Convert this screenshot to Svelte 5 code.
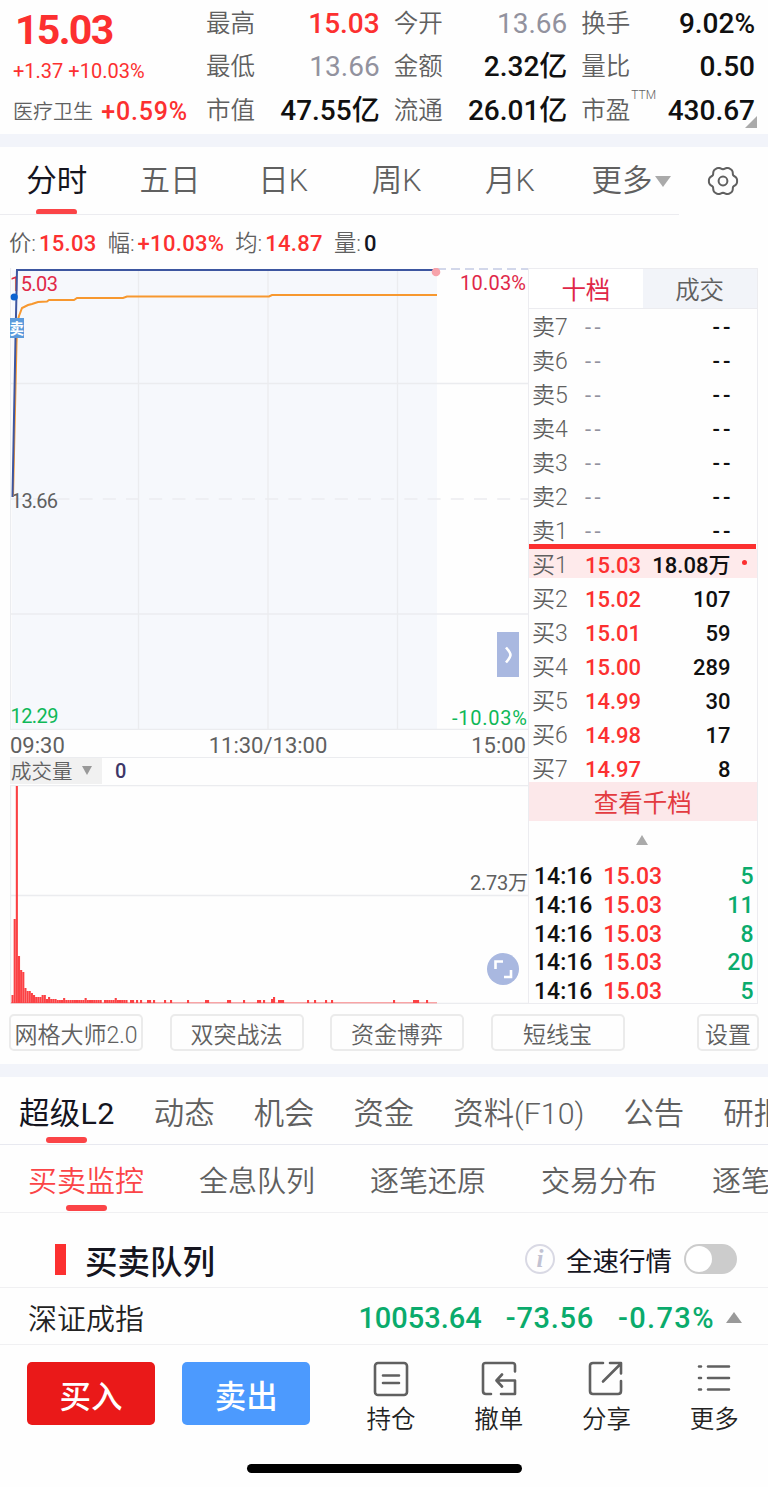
<script lang="ts">
  const stats = [
    [
      { label: '最高', value: '15.03', tone: 'up' },
      { label: '最低', value: '13.66', tone: 'flat' },
      { label: '市值', value: '47.55', unit: '亿' }
    ],
    [
      { label: '今开', value: '13.66', tone: 'flat' },
      { label: '金额', value: '2.32', unit: '亿' },
      { label: '流通', value: '26.01', unit: '亿' }
    ],
    [
      { label: '换手', value: '9.02%' },
      { label: '量比', value: '0.50' },
      { label: '市盈', sup: 'TTM', value: '430.67' }
    ]
  ]

  const periods = ['分时', '五日', '日K', '周K', '月K']
  let period = $state('分时')

  const asks = [7, 6, 5, 4, 3, 2, 1]
  const bids = [
    { price: '15.03', volume: '18.08', unit: '万' },
    { price: '15.02', volume: '107' },
    { price: '15.01', volume: '59' },
    { price: '15.00', volume: '289' },
    { price: '14.99', volume: '30' },
    { price: '14.98', volume: '17' },
    { price: '14.97', volume: '8' }
  ]
  const trades = ['5', '11', '8', '20', '5']

  const tools = ['网格大师2.0', '双突战法', '资金博弈', '短线宝']
  const sections = ['超级L2', '动态', '机会', '资金', '资料(F10)', '公告', '研报']
  const monitors = ['买卖监控', '全息队列', '逐笔还原', '交易分布', '逐笔']
  let section = $state('超级L2')
  let monitor = $state('买卖监控')
  let fullSpeed = $state(false)

  // opening minutes, one bar every 2.15px
  const opening = [
    8, 84, 217, 47, 33, 31, 15, 12, 12, 10, 8, 6, 6, 6, 8, 8, 4, 6, 4, 4, 4, 3, 3, 3, 5, 3, 3, 3, 3, 3,
    3, 3, 3, 3, 5, 3, 3, 3, 3, 3, 3, 3, 0, 3, 3, 3, 3, 3, 5, 3, 3, 3, 3, 3
  ]
  const later = [
    [120, 3], [122, 3], [126, 3], [130, 3], [137, 3], [139, 3], [143, 3], [154, 3], [160, 3],
    [177, 3], [195, 3], [197, 3], [217, 3], [219, 3], [233, 3], [247, 3], [249, 3], [253, 3],
    [261, 4], [263, 6], [268, 3], [270, 3], [272, 3], [297, 3], [304, 3], [315, 3], [321, 3],
    [383, 3], [403, 3], [405, 3], [407, 3], [416, 3]
  ]
  const bars = [...opening.map((h, i) => [1.5 + i * 2.15, h]), ...later]

  // six rounded teeth
  const gear = Array.from({ length: 72 }, (_, i) => {
    const a = (i / 72) * Math.PI * 2
    const r = 13.2 + 1.2 * Math.cos(6 * a) - 0.3 * Math.cos(12 * a)
    return `${(16 + r * Math.cos(a)).toFixed(2)},${(16 + r * Math.sin(a)).toFixed(2)}`
  }).join(' ')
</script>

<div class="page">
  <header class="quote">
    <div class="summary">
      <div class="last">15.03</div>
      <div class="change">+1.37 +10.03%</div>
      <div class="sector"><span>医疗卫生</span><b>+0.59%</b></div>
    </div>
    {#each stats as column}
      <div class="stats">
        {#each column as item}
          <div class="stat">
            <span class="label">{item.label}{#if item.sup}<sup>{item.sup}</sup>{/if}</span>
            <span class="value {item.tone ?? ''}">{item.value}{#if item.unit}<i>{item.unit}</i>{/if}</span>
          </div>
        {/each}
      </div>
    {/each}
    <span class="corner"></span>
  </header>

  <nav class="periods">
    {#each periods as name}
      <button class:active={period === name} onclick={() => (period = name)}>{name}</button>
    {/each}
    <button class="more">更多<span class="caret"></span></button>
    <svg class="gear" viewBox="0 0 32 32" width="32" height="32">
      <polygon points={gear} />
      <circle cx="16" cy="16" r="4.4" />
    </svg>
  </nav>

  <div class="readout">
    <span>价:<b>15.03</b></span>
    <span>幅:<b>+10.03%</b></span>
    <span>均:<b>14.87</b></span>
    <span>量:<b class="dark">0</b></span>
  </div>

  <main class="board">
    <section class="charts">
      <svg class="price" viewBox="0 0 518 462" width="518" height="462">
        <rect x="2" y="2" width="425" height="459" fill="#f6f8fc" />
        <g class="grid">
          <path d="M0.5 0V462M128.5 2V461M258 2V461M387.5 2V461M0 115.5H518M0 346H518M0 461.5H518" />
          <path d="M0 231H518" stroke-dasharray="13 10.2" />
        </g>
        <path d="M427 1H518" stroke="#c3cae4" stroke-width="1.5" stroke-dasharray="9 5" fill="none" />
        <text class="red" x="0" y="23" textLength="48">15.03</text>
        <text class="red" x="450" y="22" textLength="66">10.03%</text>
        <text class="gray" x="1" y="240" textLength="47">13.66</text>
        <text class="green" x="0.5" y="455" textLength="48">12.29</text>
        <text class="green" x="442" y="457" textLength="75">-10.03%</text>
        <path class="average" d="M3 229L6.5 75L7.5 54L9 48L12 40L18 37L22 36L25 35L28 34L37 33.5L39 32H64L67 30H113L117 28.5H259L262 27H427" />
        <path class="line" d="M2.5 229L5.5 70L7 2H427" />
        <circle cx="426" cy="4" r="4.3" fill="#f7a3ab" />
        <circle cx="4.2" cy="29" r="3.6" fill="#0a63d0" />
        <rect x="0" y="50" width="14" height="20" fill="#5c9bdc" />
        <text x="-0.5" y="65.5" class="sell">卖</text>
      </svg>
      <div class="times"><span>09:30</span><span>11:30/13:00</span><span>15:00</span></div>
      <div class="indicator">
        <button>成交量<span class="caret"></span></button>
        <span class="reading">0</span>
      </div>
      <svg class="volume" viewBox="0 0 518 219" width="518" height="219">
        <g class="grid"><path d="M0.5 0V219M0 0.5H518M0 110.5H518M0 218.5H518" /></g>
        <path d="M1 217.8H427" stroke="#f98080" stroke-width="1" />
        {#each bars as [x, h]}
          <rect {x} y={218 - h} width="2.1" height={h} fill="#fb4144" />
        {/each}
        <text class="gray" x="460" y="105" textLength="58">2.73万</text>
      </svg>
      <button class="drawer" aria-label="收起">
        <svg viewBox="0 0 22 45" width="22" height="45"><path d="M9 15.5C12 19 13.5 21.5 13.5 23C13.5 24.5 12 27 9 30.5" /></svg>
      </button>
      <button class="expand" aria-label="全屏">
        <svg viewBox="0 0 32 32" width="32" height="32"><path d="M8.5 16V8.5H16M17 24H24V17" /></svg>
      </button>
    </section>

    <aside class="depth">
      <div class="tabs"><span class="on">十档</span><span>成交</span></div>
      <div class="levels asks">
        {#each asks as n}
          <div class="level"><span>卖{n}</span><em>--</em><strong>--</strong></div>
        {/each}
      </div>
      <div class="divider"></div>
      <div class="levels">
        {#each bids as bid, i}
          <div class="level" class:best={i === 0}>
            <span>买{i + 1}</span><em>{bid.price}</em><strong>{bid.volume}{bid.unit ?? ''}</strong>
          </div>
        {/each}
      </div>
      <div class="all">查看千档</div>
      <div class="trades">
        <span class="caret up"></span>
        {#each trades as qty}
          <div class="trade"><span>14:16</span><em>15.03</em><strong>{qty}</strong></div>
        {/each}
      </div>
    </aside>
  </main>

  <div class="tools">
    {#each tools as tool}
      <button>{tool}</button>
    {/each}
    <button class="settings">设置</button>
  </div>

  <nav class="sections">
    {#each sections as name}
      <button class:active={section === name} onclick={() => (section = name)}>{name}</button>
    {/each}
  </nav>
  <nav class="monitors">
    {#each monitors as name}
      <button class:active={monitor === name} onclick={() => (monitor = name)}>{name}</button>
    {/each}
  </nav>

  <div class="queue">
    <h2>买卖队列</h2>
    <span class="info">i</span>
    <span class="speed">全速行情</span>
    <button class="switch" class:on={fullSpeed} aria-label="全速行情" onclick={() => (fullSpeed = !fullSpeed)}></button>
  </div>

  <div class="index">
    <span class="name">深证成指</span>
    <span class="num a">10053.64</span>
    <span class="num b">-73.56</span>
    <span class="num c">-0.73%</span>
    <span class="caret up"></span>
  </div>

  <footer>
    <button class="trade-btn buy">买入</button>
    <button class="trade-btn sell-btn">卖出</button>
    <div class="actions">
      <div class="action">
        <svg viewBox="0 0 36 36" width="36" height="36">
          <rect x="2" y="2" width="32" height="32" rx="3" />
          <path d="M10 14.5H26M10 22H26" />
        </svg>
        持仓
      </div>
      <div class="action">
        <svg viewBox="0 0 36 36" width="36" height="36">
          <path d="M34 10.5V4.5Q34 2 31.5 2H4.5Q2 2 2 4.5V30Q2 33 5 33H10M20 33H34V19.5H16M21 13.5L15.5 19.5L21 25.5" />
        </svg>
        撤单
      </div>
      <div class="action">
        <svg viewBox="0 0 36 36" width="36" height="36">
          <path d="M15 2H5Q2 2 2 5V30Q2 33 5 33H30Q33 33 33 30V20M22 2H33V12.5M32 3.5L15 20.5" />
        </svg>
        分享
      </div>
      <div class="action">
        <svg viewBox="0 0 36 36" width="36" height="36">
          <path d="M3 5.5H5M12 5.5H33M3 17H5M12 17H33M3 28.5H5M12 28.5H33" />
        </svg>
        更多
      </div>
    </div>
    <div class="home"></div>
  </footer>
</div>

<style>
  :global(body) {
    background: #fff;
  }

  .page {
    width: 768px;
    height: 1487px;
    overflow: hidden;
    background: #fefefe;
    color: #606060;
    font-family: Roboto, 'Noto Sans CJK SC', sans-serif;
    font-weight: 350;
  }

  button {
    border: 0;
    padding: 0;
    margin: 0;
    background: none;
    font: inherit;
    color: inherit;
    white-space: nowrap;
  }

  b,
  em,
  strong,
  i {
    font-style: normal;
    font-weight: 500;
  }

  .caret {
    display: inline-block;
    border: 8px solid transparent;
    border-top: 11px solid #aaa;
    border-bottom: 0;
  }

  .caret.up {
    border-top: 0;
    border-bottom: 11px solid #aaa;
  }

  .quote {
    position: relative;
    display: flex;
    gap: 14px;
    height: 134px;
    padding-right: 13px;
    box-sizing: border-box;
  }

  .summary {
    width: 192px;
    color: #fc3030;
  }

  .last {
    margin: 4px 0 0 15px;
    font-size: 41px;
    line-height: 52px;
    font-weight: 700;
    letter-spacing: -1.7px;
  }

  .change {
    margin: 3px 0 0 13px;
    font-size: 20px;
    line-height: 24px;
    font-weight: 400;
    white-space: nowrap;
  }

  .sector {
    display: flex;
    justify-content: space-between;
    margin: 11px 4px 0 13px;
    line-height: 36px;
    white-space: nowrap;
  }

  .sector span {
    font-size: 20px;
    color: #606060;
  }

  .sector b {
    font-size: 25px;
    letter-spacing: 0.8px;
  }

  .stats {
    flex: 1;
    padding-top: 1.5px;
  }

  .stat {
    display: flex;
    justify-content: space-between;
    height: 43.8px;
    line-height: 44px;
  }

  .label {
    position: relative;
    font-size: 24.5px;
  }

  .label sup {
    position: absolute;
    left: 50px;
    top: -16px;
    font-size: 12px;
  }

  .value {
    font-size: 28px;
    font-weight: 500;
    color: #101010;
  }

  .value.up {
    color: #fc3030;
  }

  .value.flat {
    color: #92929e;
    font-weight: 400;
  }

  .corner {
    position: absolute;
    left: 745px;
    top: 116px;
    border: 6px solid #aaa;
    border-top-color: transparent;
    border-left-color: transparent;
  }

  .periods {
    display: flex;
    align-items: center;
    position: relative;
    height: 67px;
    border-top: 13px solid #f2f4fa;
    font-size: 30.5px;
  }

  .periods::after {
    content: '';
    position: absolute;
    left: 0;
    bottom: -1px;
    width: 679px;
    height: 1px;
    background: #ececf0;
  }

  .periods button {
    position: relative;
    width: 113.3px;
    height: 67px;
    padding-bottom: 6px;
  }

  .periods .more {
    width: 130px;
  }

  .more .caret {
    margin: 0 0 4px 3px;
  }

  .gear {
    margin-left: 11px;
    fill: none;
    stroke: #606060;
    stroke-width: 2;
  }

  .active {
    color: #15151f;
    font-weight: 400;
  }

  nav .active::after {
    content: '';
    position: absolute;
    left: calc(50% - 20.5px);
    bottom: -1px;
    width: 41px;
    height: 6px;
    border-radius: 3px;
    background: #fb4447;
  }

  .readout {
    display: flex;
    gap: 11px;
    height: 54px;
    padding: 2px 0 0 9px;
    box-sizing: border-box;
    line-height: 54px;
    font-size: 22.3px;
  }

  .readout b {
    margin-left: 3px;
    font-size: 22px;
    letter-spacing: 0.3px;
    color: #fc3030;
  }

  .readout .dark {
    color: #15151f;
  }

  .board {
    display: flex;
    height: 736px;
    padding-left: 10px;
  }

  .charts {
    position: relative;
    display: flex;
    flex-direction: column;
    width: 518px;
  }

  .charts svg {
    display: block;
  }

  .grid path {
    fill: none;
    stroke: #ebecef;
    stroke-width: 1.3;
  }

  .price text,
  .volume text {
    font-size: 20px;
    font-weight: 400;
  }

  .charts .red {
    fill: #e02848;
  }

  .charts .gray {
    fill: #606060;
  }

  .charts .green {
    fill: #0fb858;
  }

  .line {
    fill: none;
    stroke: #3d56a0;
    stroke-width: 2;
  }

  .average {
    fill: none;
    stroke: #f7982f;
    stroke-width: 2;
  }

  .price .sell {
    font-size: 14.5px;
    font-weight: 700;
    fill: #fff;
  }

  .times {
    display: flex;
    justify-content: space-between;
    height: 27px;
    padding-right: 2px;
    line-height: 31px;
    font-size: 22px;
    font-weight: 400;
  }

  .indicator {
    display: flex;
    height: 28px;
    box-sizing: border-box;
    border-top: 1px solid #ebecef;
  }

  .indicator button {
    display: flex;
    align-items: center;
    justify-content: space-between;
    width: 92px;
    height: 26px;
    padding: 0 10px 2px 1px;
    box-sizing: border-box;
    background: #f1f1f1;
    font-size: 20.5px;
  }

  .indicator .caret {
    border-width: 9px 5.5px 0;
    border-top-color: #999;
  }

  .reading {
    margin-left: 13px;
    line-height: 26px;
    font-size: 20px;
    font-weight: 500;
    color: #3e3768;
  }

  .drawer,
  .expand {
    position: absolute;
    background: #a9b8e0;
  }

  .drawer {
    left: 487px;
    top: 364px;
    width: 22px;
    height: 45px;
  }

  .expand {
    left: 477px;
    top: 685px;
    width: 32px;
    height: 32px;
    border-radius: 50%;
  }

  .drawer path,
  .expand path {
    fill: none;
    stroke: #fff;
    stroke-width: 2.6;
  }

  .depth {
    display: flex;
    flex-direction: column;
    width: 229.5px;
    box-sizing: border-box;
    border: 1px solid #ececf0;
  }

  .tabs {
    display: flex;
    height: 39px;
    border-bottom: 1px solid #ececf0;
    line-height: 44px;
    font-size: 24.5px;
    text-align: center;
  }

  .tabs span {
    flex: 1;
    background: #f2f4f9;
  }

  .tabs .on {
    background: #fff;
    color: #e02848;
    font-weight: 400;
  }

  .levels {
    display: flex;
    flex-direction: column;
    gap: 5px;
  }

  .asks {
    padding-top: 2px;
  }

  .level {
    position: relative;
    display: flex;
    height: 29px;
    line-height: 33px;
    padding: 0 26px 0 3px;
    font-size: 22px;
    white-space: nowrap;
  }

  .level span {
    width: 35px;
    font-size: 23px;
  }

  .level em {
    margin-left: 18px;
    color: #fc3030;
  }

  .asks em {
    color: #92929e;
    letter-spacing: 3.5px;
    font-weight: 400;
  }

  .level strong {
    margin-left: auto;
    color: #101010;
  }

  .asks strong {
    letter-spacing: 3px;
    margin-right: -3px;
  }

  .best {
    background: #feeaeb;
  }

  .best::after {
    content: '';
    position: absolute;
    right: 10px;
    top: 11px;
    width: 5px;
    height: 5px;
    border-radius: 50%;
    background: #fc3030;
  }

  .divider {
    flex-shrink: 0;
    height: 5px;
    margin-right: 1px;
    background: #fc3030;
  }

  .all {
    flex-shrink: 0;
    height: 39px;
    background: #fce8ea;
    color: #e33b40;
    text-align: center;
    line-height: 43px;
    font-size: 24.5px;
    font-weight: 400;
  }

  .trades {
    display: flex;
    flex-direction: column;
    padding: 14px 3px 0 5px;
  }

  .trades .caret {
    align-self: center;
    margin: 0 4px 16px 0;
    border-width: 0 6.5px 10px;
  }

  .trade {
    display: flex;
    height: 28.8px;
    line-height: 32px;
    font-size: 23px;
    font-weight: 500;
    color: #101010;
  }

  .trade em {
    margin-left: 11px;
    color: #fc3030;
  }

  .trade strong {
    margin-left: auto;
    color: #0aab6c;
  }

  .tools {
    display: flex;
    gap: 26.5px;
    height: 60px;
    padding: 10px 9px 0;
    box-sizing: border-box;
  }

  .tools button {
    width: 134px;
    height: 37px;
    box-sizing: border-box;
    border: 2px solid #ebebeb;
    border-radius: 5px;
    font-size: 23px;
  }

  .tools .settings {
    width: 62px;
    margin-left: auto;
  }

  .sections,
  .monitors {
    display: flex;
    overflow: hidden;
    box-sizing: border-box;
  }

  .sections {
    gap: 39px;
    height: 81px;
    padding-left: 19px;
    border-top: 13px solid #f2f4fa;
    border-bottom: 1px solid #e8e9f0;
    font-size: 30.4px;
  }

  .sections .active {
    letter-spacing: 0.4px;
  }

  .monitors {
    gap: 55px;
    height: 68px;
    padding-left: 28px;
    border-bottom: 1px solid #f0f0f2;
    font-size: 29px;
  }

  .sections button,
  .monitors button {
    position: relative;
    flex-shrink: 0;
  }

  .sections .active::after,
  .monitors .active::after {
    bottom: 1px;
  }

  .monitors .active {
    color: #fb4447;
    font-weight: 350;
  }

  .queue {
    display: flex;
    align-items: center;
    height: 75px;
    padding: 18px 31px 0 55px;
    box-sizing: border-box;
    border-bottom: 1px solid #f0f0f2;
    color: #15151f;
  }

  h2 {
    display: flex;
    align-items: center;
    margin: 0 auto 0 0;
    font-size: 32.5px;
    font-weight: 500;
  }

  h2::before {
    content: '';
    width: 11px;
    height: 31px;
    margin-right: 19px;
    background: #fc3030;
  }

  .info {
    width: 26px;
    height: 26px;
    border: 2px solid #d9d9e4;
    border-radius: 50%;
    color: #c2c2d2;
    text-align: center;
    font: italic bold 25px/25px 'Liberation Serif', serif;
  }

  .speed {
    margin: 0 12px 0 11px;
    font-size: 26.5px;
    font-weight: 400;
  }

  .switch {
    display: flex;
    width: 53px;
    height: 30px;
    padding: 2px;
    box-sizing: border-box;
    border-radius: 15px;
    background: #ccc;
  }

  .switch::before {
    content: '';
    width: 26px;
    height: 26px;
    border-radius: 50%;
    background: #fff;
  }

  .switch.on {
    justify-content: flex-end;
    background: #fb4447;
  }

  .index {
    display: flex;
    align-items: center;
    height: 57px;
    padding: 2px 26px 0 28px;
    box-sizing: border-box;
    border-bottom: 1px solid #f0f0f2;
    font-size: 29px;
    font-weight: 500;
    color: #0aab6c;
  }

  .name {
    margin-right: auto;
    color: #222;
    font-weight: 350;
  }

  .num {
    padding-top: 2px;
    margin-right: 24px;
  }

  .index .b {
    letter-spacing: 0.7px;
  }

  .index .c {
    margin-right: 11px;
    letter-spacing: 1.4px;
  }

  .index .caret {
    border-bottom-color: #999;
  }

  footer {
    position: relative;
    display: flex;
    gap: 27px;
    height: 143px;
    padding: 17px 0 0 27px;
    box-sizing: border-box;
  }

  .trade-btn {
    width: 129px;
    height: 63px;
    border-radius: 5px;
    color: #fff;
    font-size: 31.5px;
    font-weight: 500;
  }

  .buy {
    background: #ea1919;
  }

  .sell-btn {
    background: #4c9afe;
  }

  .actions {
    display: flex;
    flex: 1;
  }

  .action {
    display: flex;
    flex-direction: column;
    align-items: center;
    width: 107.7px;
    line-height: 45px;
    font-size: 24.5px;
    color: #222;
  }

  .action svg {
    flex-shrink: 0;
    margin-top: -1px;
    fill: none;
    stroke: #606060;
    stroke-width: 2.6;
    stroke-linecap: round;
    stroke-linejoin: round;
  }

  .home {
    position: absolute;
    left: 247px;
    top: 119px;
    width: 275px;
    height: 9px;
    border-radius: 5px;
    background: #000;
  }
</style>
